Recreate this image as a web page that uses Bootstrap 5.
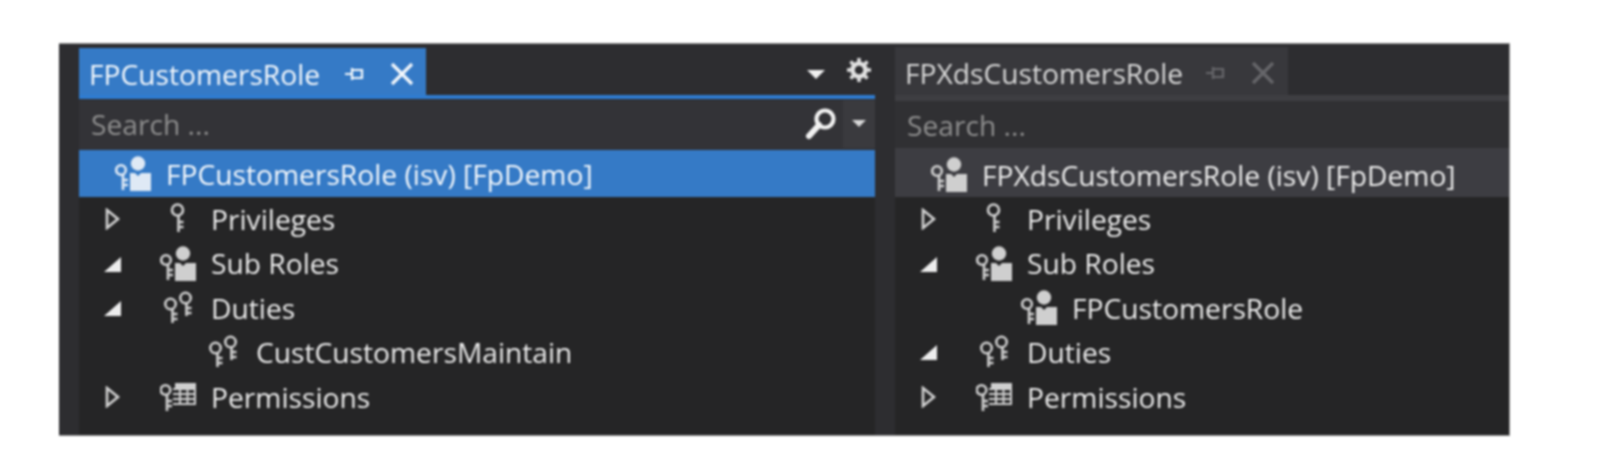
<!doctype html>
<html lang="en">
<head>
<meta charset="utf-8">
<title>Roles</title>
<link href="https://cdn.jsdelivr.net/npm/bootstrap@5.3.0/dist/css/bootstrap.min.css" rel="stylesheet">
<style>
html,body{background:#fff;height:463px;overflow:hidden}
.shot{width:1451px;height:393px;margin:43px 0 0 59px;background:#2d2d30;border:1px solid #8f8f8f;border-left:0;filter:blur(.85px);font-family:"Open Sans","Noto Sans",sans-serif;font-size:28.2px;font-weight:500;color:#ececec;overflow:hidden}
.gutter{width:20px;flex:none}
.pane-a{width:796px;flex:none}
.pane-b{flex:1 1 auto;min-width:0}
.tab-on{width:347px;height:47px;margin-top:4px;background:#357ac6;color:#f4f8fc;padding:5px 0 0 10px}
.tab-off{width:393px;height:48px;margin-top:3px;background:#38383c;color:#d8d8d8;padding:4px 0 0 10px}
.rule-on{height:4px;background:#2f7cd0;flex:none}
.rule-off{height:6px;background:#3e3e42;flex:none}
.tabbar-a,.tabbar-b{height:51px;flex:none}
.tab-name{width:253px;white-space:nowrap}
.tab-name-off{width:298px;white-space:nowrap}
.searchbox{height:50px;background:#333337;color:#8f8f8f;padding:0 0 2px 12px;flex:none;margin-top:1px}
.pane-b .searchbox{background:#303033;height:47px;padding:1px 0 0 12px;margin-top:0}
.search-drop{width:32px;height:48px;background:#3a3a3e}
.tree{height:240px;background:#252526}
.node{height:44.4px;white-space:nowrap}
.node-root{height:47px;padding:1px 0 0 36px;flex:none}
.pane-b .node-root{height:49px;padding-top:5px}
.node-sel{background:#357ac6;color:#f4f8fc}
.node-dim{background:#3d3d42}
.lv1{padding-left:22px}
.lv2{padding-left:126px}
.twisty{width:22px;margin-right:37px;flex:none}
.ico{width:36px;height:36px;flex:none;margin-right:15px}
.ico-head{fill:none;stroke:currentColor;stroke-width:2.6}
.ico-fill{fill:currentColor}
.ink{color:#cfcfcf}
.node-sel .ink{color:#dfe9f5}
.gap-tools{width:72px;padding-top:10px}
.tool-caret{margin-left:4px}
.tool-gear{margin-left:21px;margin-top:-10px}
.tool-lens{margin-right:3px}
</style>
</head>
<body>
<svg width="0" height="0" class="position-absolute">
  <symbol id="k-one" viewBox="0 0 36 36"><circle class="ico-head" cx="17.500" cy="9" r="5.500"/><path class="ico-head" d="M18.500 15V31M18.500 21h5M18.500 26h5"/></symbol>
  <symbol id="k-two" viewBox="0 0 36 36"><circle class="ico-head" cx="10.500" cy="14" r="5.200"/><circle class="ico-head" cx="25.500" cy="8" r="5.200"/><path class="ico-head" d="M12.500 19V33M12.500 24h5M12.500 29h5M26.500 13V26M26.500 18h5M26.500 23h5"/></symbol>
  <symbol id="k-role" viewBox="0 0 36 36"><circle class="ico-head" cx="6" cy="14" r="4.800"/><path class="ico-head" d="M8 18.500V34M8 24h5M8 29h5"/><circle class="ico-fill" cx="23" cy="7.500" r="7.200"/><path class="ico-fill" d="M15 17h5l3 3 3-3h10v18H15z"/></symbol>
  <symbol id="k-grid" viewBox="0 0 36 36"><circle class="ico-head" cx="5.500" cy="11" r="4.800"/><path class="ico-head" d="M7 15.500V32M7 22h5M7 27h5"/><path class="ico-fill" d="M15 4h21v5H15z"/><path fill="none" stroke="currentColor" stroke-width="2" d="M13 10h22v15H13M20 10v15M27.500 10v15M35 10v15M13 15h22M13 20h22"/></symbol>
</svg>

<div class="shot d-flex">
  <div class="gutter"></div>

  <section class="pane-a d-flex flex-column">
    <div class="tabbar-a d-flex justify-content-between">
      <div class="tab-on d-flex align-items-center">
        <span class="tab-name">FPCustomersRole</span>
        <svg width="24" height="20" viewBox="0 0 24 20" class="me-4"><path d="M3 10h7M10 4v12M10 6h10v8H10" fill="none" stroke="currentColor" stroke-width="2.200"/></svg>
        <svg width="24" height="24" viewBox="0 0 24 24"><path d="M2 2 22 22M22 2 2 22" stroke="currentColor" stroke-width="3.200"/></svg>
      </div>
      <div class="gap-tools d-flex align-items-center">
        <svg width="18" height="10" viewBox="0 0 18 10" class="tool-caret"><path d="M0 0h18L9 9z" fill="#f0f0f0"/></svg>
        <svg width="26" height="26" viewBox="0 0 26 26" class="tool-gear"><circle cx="13" cy="13" r="6.500" fill="none" stroke="#e0e0e0" stroke-width="4.500"/><path d="M13 1v24M1 13h24M4.500 4.500l17 17M21.500 4.500l-17 17" stroke="#e0e0e0" stroke-width="3.500" stroke-dasharray="4 16 4"/></svg>
      </div>
    </div>
    <div class="rule-on"></div>
    <div class="searchbox d-flex align-items-center justify-content-between">
      <span>Search ...</span>
      <div class="d-flex align-items-center">
        <svg width="36" height="36" viewBox="0 0 36 36" class="tool-lens"><circle cx="21" cy="13" r="8.500" fill="none" stroke="#f2f2f2" stroke-width="4.200"/><path d="M15 19 5 30" stroke="#f2f2f2" stroke-width="6" stroke-linecap="round"/></svg>
        <div class="search-drop d-flex align-items-center justify-content-center"><svg width="14" height="8" viewBox="0 0 14 8"><path d="M0 0h14L7 7z" fill="#d8d8d8"/></svg></div>
      </div>
    </div>
    <div class="node-root node-sel d-flex align-items-center">
      <svg class="ico ink"><use href="#k-role"/></svg><span>FPCustomersRole (isv) [FpDemo]</span>
    </div>
    <div class="tree flex-grow-1">
      <div class="node lv1 d-flex align-items-center"><svg class="twisty" height="22" viewBox="0 0 22 22"><path d="M6 2 17 11 6 20z" fill="none" stroke="#d0d0d0" stroke-width="2.600"/></svg><svg class="ico ink"><use href="#k-one"/></svg><span>Privileges</span></div>
      <div class="node lv1 d-flex align-items-center"><svg class="twisty" height="22" viewBox="0 0 22 22"><path d="M3 19 20 4v15z" fill="#ededed"/></svg><svg class="ico ink"><use href="#k-role"/></svg><span>Sub Roles</span></div>
      <div class="node lv1 d-flex align-items-center"><svg class="twisty" height="22" viewBox="0 0 22 22"><path d="M3 19 20 4v15z" fill="#ededed"/></svg><svg class="ico ink"><use href="#k-two"/></svg><span>Duties</span></div>
      <div class="node lv2 d-flex align-items-center"><svg class="ico ink"><use href="#k-two"/></svg><span>CustCustomersMaintain</span></div>
      <div class="node lv1 d-flex align-items-center"><svg class="twisty" height="22" viewBox="0 0 22 22"><path d="M6 2 17 11 6 20z" fill="none" stroke="#d0d0d0" stroke-width="2.600"/></svg><svg class="ico ink"><use href="#k-grid"/></svg><span>Permissions</span></div>
    </div>
  </section>

  <div class="gutter"></div>

  <section class="pane-b d-flex flex-column">
    <div class="tabbar-b d-flex">
      <div class="tab-off d-flex align-items-center">
        <span class="tab-name-off">FPXdsCustomersRole</span>
        <svg width="24" height="20" viewBox="0 0 24 20" class="me-4" color="#66666a"><path d="M3 10h7M10 4v12M10 6h10v8H10" fill="none" stroke="currentColor" stroke-width="2.200"/></svg>
        <svg width="24" height="24" viewBox="0 0 24 24" color="#66666a"><path d="M2 2 22 22M22 2 2 22" stroke="currentColor" stroke-width="3.200"/></svg>
      </div>
    </div>
    <div class="rule-off"></div>
    <div class="searchbox d-flex align-items-center"><span>Search ...</span></div>
    <div class="node-root node-dim d-flex align-items-center">
      <svg class="ico ink"><use href="#k-role"/></svg><span>FPXdsCustomersRole (isv) [FpDemo]</span>
    </div>
    <div class="tree flex-grow-1">
      <div class="node lv1 d-flex align-items-center"><svg class="twisty" height="22" viewBox="0 0 22 22"><path d="M6 2 17 11 6 20z" fill="none" stroke="#d0d0d0" stroke-width="2.600"/></svg><svg class="ico ink"><use href="#k-one"/></svg><span>Privileges</span></div>
      <div class="node lv1 d-flex align-items-center"><svg class="twisty" height="22" viewBox="0 0 22 22"><path d="M3 19 20 4v15z" fill="#ededed"/></svg><svg class="ico ink"><use href="#k-role"/></svg><span>Sub Roles</span></div>
      <div class="node lv2 d-flex align-items-center"><svg class="ico ink"><use href="#k-role"/></svg><span>FPCustomersRole</span></div>
      <div class="node lv1 d-flex align-items-center"><svg class="twisty" height="22" viewBox="0 0 22 22"><path d="M3 19 20 4v15z" fill="#ededed"/></svg><svg class="ico ink"><use href="#k-two"/></svg><span>Duties</span></div>
      <div class="node lv1 d-flex align-items-center"><svg class="twisty" height="22" viewBox="0 0 22 22"><path d="M6 2 17 11 6 20z" fill="none" stroke="#d0d0d0" stroke-width="2.600"/></svg><svg class="ico ink"><use href="#k-grid"/></svg><span>Permissions</span></div>
    </div>
  </section>
</div>
</body>
</html>
